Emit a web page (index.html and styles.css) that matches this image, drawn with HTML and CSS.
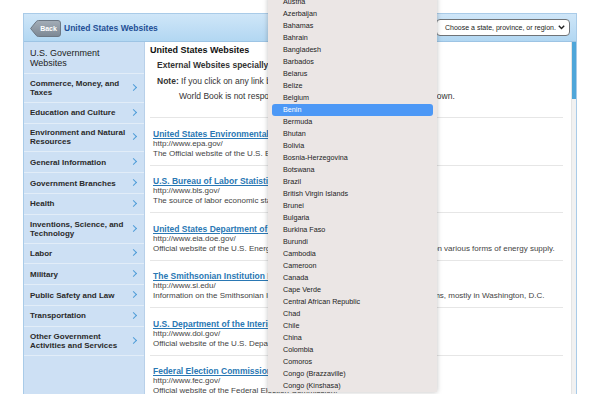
FILE: index.html
```html
<!DOCTYPE html>
<html lang="en">
<head>
  <meta charset="UTF-8" />
  <meta name="viewport" content="width=device-width, initial-scale=1.0"/>
  <title>United States Websites</title>
  <link rel="stylesheet" href="styles.css">
</head>
<body>

  <div class="frame">
    <div class="topbar">
      <svg class="back-btn" width="31" height="17" viewBox="0 0 31 17">
        <defs>
          <linearGradient id="backGrad" x1="0" y1="0" x2="0" y2="1">
            <stop offset="0" stop-color="#a3adb7"/>
            <stop offset="1" stop-color="#7d8894"/>
          </linearGradient>
        </defs>
        <path d="M0.6 8.5 L6.2 1.6 Q7 0.5 8.6 0.5 H28 Q30.5 0.5 30.5 3 V14 Q30.5 16.5 28 16.5 H8.6 Q7 16.5 6.2 15.4 Z" fill="url(#backGrad)" stroke="#6d7884"/>
        <text x="18.5" y="11.4" text-anchor="middle">Back</text>
      </svg>
      <div class="topbar-title">United States Websites</div>
      <div class="region-select">
        <span>Choose a state, province, or region.</span>
        <svg width="7" height="5" viewBox="0 0 7 5"><polyline points="0.8,0.8 3.5,3.6 6.2,0.8" fill="none" stroke="#222" stroke-width="1.4"/></svg>
      </div>
    </div>

    <div class="main">
      <div class="sidebar">
        <div class="side-head">U.S. Government<br>Websites</div>
        <div class="side-item">Commerce, Money, and<br>Taxes</div>
        <div class="side-item">Education and Culture</div>
        <div class="side-item">Environment and Natural<br>Resources</div>
        <div class="side-item">General Information</div>
        <div class="side-item">Government Branches</div>
        <div class="side-item">Health</div>
        <div class="side-item">Inventions, Science, and<br>Technology</div>
        <div class="side-item">Labor</div>
        <div class="side-item">Military</div>
        <div class="side-item">Public Safety and Law</div>
        <div class="side-item">Transportation</div>
        <div class="side-item">Other Government<br>Activities and Services</div>
      </div>

      <div class="content">
        <h1>United States Websites</h1>
        <div class="intro">
          <p class="intro-sub">External Websites specially selected by World Book editors.</p>
          <p class="intro-note"><b>Note:</b> If you click on any link below, a new browser window will then open.</p>
          <p class="intro-warn">World Book is not responsible for the content of websites it does not own.</p>
        </div>

        <div class="site">
          <a href="#">United States Environmental Protection Agency</a>
          <div class="site-url">http://www.epa.gov/</div>
          <div class="site-desc">The Official website of the U.S. Environmental Protection Agency.</div>
        </div>
        <div class="site">
          <a href="#">U.S. Bureau of Labor Statistics</a>
          <div class="site-url">http://www.bls.gov/</div>
          <div class="site-desc">The source of labor economic statistics for the United States.</div>
        </div>
        <div class="site">
          <a href="#">United States Department of Energy</a>
          <div class="site-url">http://www.eia.doe.gov/</div>
          <div class="site-desc">Official website of the U.S. Energy Information Administration, with its statistics on various forms of energy supply.</div>
        </div>
        <div class="site">
          <a href="#">The Smithsonian Institution Home Page</a>
          <div class="site-url">http://www.si.edu/</div>
          <div class="site-desc">Information on the Smithsonian Institution and its many world-renowned museums, mostly in Washington, D.C.</div>
        </div>
        <div class="site">
          <a href="#">U.S. Department of the Interior</a>
          <div class="site-url">http://www.doi.gov/</div>
          <div class="site-desc">Official website of the U.S. Department of the Interior.</div>
        </div>
        <div class="site">
          <a href="#">Federal Election Commission</a>
          <div class="site-url">http://www.fec.gov/</div>
          <div class="site-desc">Official website of the Federal Election Commission.</div>
        </div>
      </div>

      <div class="scrollbar"><div class="thumb"></div></div>
    </div>
  </div>

  <ul class="dropdown">
    <li>Austria</li>
    <li>Azerbaijan</li>
    <li>Bahamas</li>
    <li>Bahrain</li>
    <li>Bangladesh</li>
    <li>Barbados</li>
    <li>Belarus</li>
    <li>Belize</li>
    <li>Belgium</li>
    <li class="selected">Benin</li>
    <li>Bermuda</li>
    <li>Bhutan</li>
    <li>Bolivia</li>
    <li>Bosnia-Herzegovina</li>
    <li>Botswana</li>
    <li>Brazil</li>
    <li>British Virgin Islands</li>
    <li>Brunei</li>
    <li>Bulgaria</li>
    <li>Burkina Faso</li>
    <li>Burundi</li>
    <li>Cambodia</li>
    <li>Cameroon</li>
    <li>Canada</li>
    <li>Cape Verde</li>
    <li>Central African Republic</li>
    <li>Chad</li>
    <li>Chile</li>
    <li>China</li>
    <li>Colombia</li>
    <li>Comoros</li>
    <li>Congo (Brazzaville)</li>
    <li>Congo (Kinshasa)</li>
  </ul>

</body>
</html>
```

FILE: styles.css
```css
* {
  box-sizing: border-box;
  font-family: "Liberation Sans", Arial, sans-serif;
  margin: 0;
  padding: 0;
}

body {
  background-color: #fff;
  color: #222;
  height: 394px;
  overflow: hidden;
  position: relative;
}

.frame {
  margin: 13px 0 0 23px;
  width: 554px;
  height: 420px;
  border: 1px solid #a9cbe8;
  display: flex;
  flex-direction: column;
}

/* top bar */
.topbar {
  height: 28px;
  flex: none;
  display: flex;
  align-items: center;
  padding: 0 6px;
  background: linear-gradient(#cfe6f8, #b2d7f2);
  border-bottom: 1px solid #9dc4e4;
}

.back-btn {
  flex: none;
  margin-top: 1px;
}

.back-btn text {
  fill: #fff;
  font-family: "Liberation Sans", Arial, sans-serif;
  font-size: 7px;
  font-weight: bold;
}

.topbar-title {
  margin-left: 3px;
  font-size: 8.5px;
  font-weight: bold;
  color: #1f4f95;
}

.region-select {
  margin-left: auto;
  width: 134px;
  height: 17px;
  background-color: #fff;
  border: 1px solid #6f7377;
  border-radius: 4px;
  display: flex;
  align-items: center;
  justify-content: space-between;
  padding: 0 4px 0 8px;
  font-size: 7px;
  color: #222;
}

/* main area */
.main {
  flex: 1;
  display: flex;
  min-height: 0;
}

.sidebar {
  width: 121px;
  flex: none;
  background-color: #cde0f4;
  border-right: 1px solid #b8d0e9;
}

.side-head {
  padding: 5.5px 6px;
  font-size: 9px;
  line-height: 10px;
  color: #222;
  border-bottom: 1px solid #e2edf8;
}

.side-item {
  position: relative;
  min-height: 20.8px;
  padding: 4.9px 14px 4.9px 6px;
  font-size: 8px;
  line-height: 9px;
  font-weight: bold;
  color: #2a2a2a;
  white-space: nowrap;
  border-bottom: 1px solid #e2edf8;
  display: flex;
  align-items: center;
}

.side-item::after {
  content: "";
  position: absolute;
  right: 8px;
  top: 50%;
  width: 4px;
  height: 4px;
  margin-top: -3px;
  border-top: 1.6px solid #4e9cd8;
  border-right: 1.6px solid #4e9cd8;
  transform: rotate(45deg);
}

.content {
  flex: 1;
  padding: 0 8px 0 5px;
  color: #444;
  overflow: hidden;
}

.content h1 {
  font-size: 9px;
  font-weight: bold;
  color: #111;
  line-height: 11px;
  margin-top: 3px;
}

.intro {
  padding: 0 0 15px 7px;
  border-bottom: 1px solid #e6e6e6;
  font-size: 8.5px;
  line-height: 11px;
  color: #333;
  white-space: nowrap;
}

.intro-sub {
  font-weight: bold;
  margin-top: 4px;
}

.intro-note {
  margin-top: 5px;
}

.intro-warn {
  margin-top: 4px;
  padding-left: 22px;
}

.site {
  padding: 10.5px 0 6px 3px;
  border-bottom: 1px solid #e6e6e6;
  font-size: 8px;
  line-height: 10px;
  white-space: nowrap;
}

.site a {
  display: block;
  font-size: 8.5px;
  line-height: 10px;
  font-weight: bold;
  color: #2a78b4;
}

.site-url,
.site-desc {
  color: #444;
}

.scrollbar {
  width: 5px;
  flex: none;
  background-color: #f1f1f1;
  border-left: 1px solid #e4e4e4;
}

.thumb {
  height: 57px;
  background-color: #4fa6d9;
}

/* open select list */
.dropdown {
  position: absolute;
  left: 268px;
  top: -4px;
  width: 169px;
  padding: 0 4px;
  list-style: none;
  background-color: #ebe6e5;
  box-shadow: 0 0 5px rgba(0, 0, 0, 0.25);
}

.dropdown li {
  height: 12px;
  line-height: 12px;
  padding-left: 11px;
  font-size: 7.2px;
  color: #222;
  border-radius: 3px;
  white-space: nowrap;
}

.dropdown li.selected {
  background-color: #4c98f6;
  color: #fff;
}
```
